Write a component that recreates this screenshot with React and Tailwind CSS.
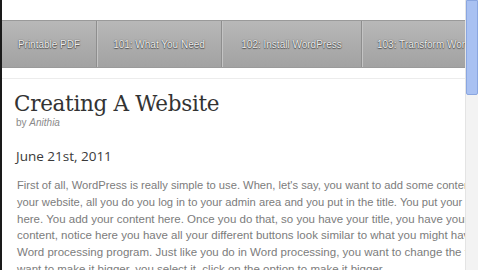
import React from 'react'

const navItems = [
  { label: 'Printable PDF', w: 'w-[95px]' },
  { label: '101: What You Need', w: 'w-[125px]' },
  { label: '102: Install WordPress', w: 'w-[140px]' },
  { label: '103: Transform WordPress', w: 'w-[140px]', left: true },
]

// first two lines render a touch narrower than the rest in the screenshot
const lines = [
  { t: "First of all, WordPress is really simple to use. When, let's say, you want to add some content to", narrow: true },
  { t: 'your website, all you do you log in to your admin area and you put in the title. You put your', narrow: true },
  { t: 'here. You add your content here. Once you do that, so you have your title, you have your' },
  { t: 'content, notice here you have all your different buttons look similar to what you might have in a' },
  { t: 'Word processing program. Just like you do in Word processing, you want to change the text' },
  { t: 'want to make it bigger, you select it, click on the option to make it bigger.' },
]

const App = () => {
  return (
    <div className="w-[480px] h-[270px] overflow-hidden bg-white flex">
      {/* left edge */}
      <div className="w-[2px] bg-[#1a1a1a]" />

      {/* page */}
      <div className="w-[464px] overflow-hidden border-r border-[#e4e4e4]">
        <div className="h-[20px]" />

        {/* Nav bar */}
        <div className="h-[48px] flex bg-gradient-to-b from-[#b8b8b8] to-[#a2a2a2] border-y border-[#9a9a9a]">
          {navItems.map((item, i) => (
            <div
              key={item.label}
              className={`${item.w} shrink-0 h-full flex items-center ${item.left ? 'pl-[15px]' : 'justify-center'} ${i < navItems.length - 1 ? 'border-r border-[#8e8e8e] shadow-[1px_0_0_#c4c4c4]' : ''}`}
            >
              <span className="whitespace-nowrap text-[10px] text-[#eeeeee] font-['Liberation_Sans',sans-serif] [text-shadow:0_0_1px_#333,0_1px_1px_#555]">
                {item.label}
              </span>
            </div>
          ))}
        </div>

        <div className="h-[10px]" />
        <div className="h-px bg-[#ececec]" />

        {/* Content */}
        <div className="pl-[12px] pt-[13px]">
          <h1 className="text-[21.5px] leading-[24px] text-[#333] font-['DejaVu_Serif',serif] tracking-[-0.3px]">
            Creating A Website
          </h1>
          <p className="pl-[2px] mt-[1px] text-[10px] leading-[12px] text-[#8a8a8a] font-['Liberation_Sans',sans-serif]">
            by <em>Anithia</em>
          </p>
          <p className="pl-[2px] mt-[19px] text-[13.5px] leading-[16px] text-[#3a3a3a] font-['Open_Sans',sans-serif]">
            June 21st, 2011
          </p>
          <div className="pl-[3px] mt-[13px] leading-[16.8px] text-[#7c7c7c] font-['Liberation_Sans',sans-serif]">
            {lines.map((l) => (
              <div key={l.t} className={`whitespace-nowrap ${l.narrow ? 'text-[11.2px]' : 'text-[11.5px]'}`}>
                {l.t}
              </div>
            ))}
          </div>
        </div>
      </div>

      {/* scrollbar */}
      <div className="w-[12px] flex flex-col bg-[#f3f3f3]">
        <div className="h-[95px] bg-[#a9c1f2] border border-[#8aa6e0] rounded-b-[2px]" />
      </div>
      <div className="flex-1 bg-white" />
    </div>
  )
}

export default App
